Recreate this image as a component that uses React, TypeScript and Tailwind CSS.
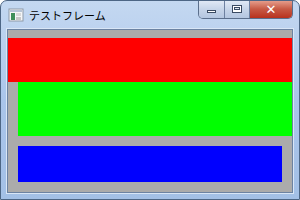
export default function App() {
  return (
    <div className="w-[300px] h-[200px] bg-white">
      <div className="relative flex h-full w-full flex-col overflow-hidden rounded-t-[7px] border border-[#4d6685] bg-gradient-to-b from-[#c4d8f1] via-[#aac5ea] to-[#a3c0e6]">
        {/* title bar */}
        <div className="flex h-[28px] shrink-0 items-start pl-[7px] pt-[6px]">
          <svg width="16" height="16" viewBox="0 0 16 16" className="shrink-0">
            <rect x="1" y="2" width="14" height="12" fill="#f4f6f8" stroke="#8e9aa8" />
            <rect x="2" y="3" width="12" height="2" fill="#b6c4d6" />
            <rect x="3" y="6" width="4" height="7" fill="#3f8f5a" />
            <rect x="8" y="6" width="5" height="3" fill="#d9d9d9" />
            <rect x="8" y="10" width="5" height="3" fill="#c8c8c8" />
          </svg>
          <span className="ml-[5px] mt-[1px] text-[11px] leading-[14px] text-black [font-family:'Noto_Sans_CJK_JP','Noto_Sans',sans-serif]">
            テストフレーム
          </span>
        </div>

        {/* caption buttons */}
        <div className="absolute right-[6px] top-[-1px] flex h-[19px] overflow-hidden rounded-b-[5px] border border-t-0 border-[#5b6f8c]">
          <div className="flex w-[26px] items-center justify-center border-r border-[#6d80a0] bg-gradient-to-b from-[#e3ebf6] via-[#c7d5e9] to-[#b4c6e0]">
            <div className="mt-[5px] h-[3px] w-[9px] border border-[#3a4a62] bg-white" />
          </div>
          <div className="flex w-[25px] items-center justify-center border-r border-[#6d80a0] bg-gradient-to-b from-[#e3ebf6] via-[#c7d5e9] to-[#b4c6e0]">
            <div className="h-[8px] w-[10px] border border-[#3a4a62] bg-white">
              <div className="m-[1px] h-[3px] border border-[#3a4a62] bg-[#dfe6f0]" />
            </div>
          </div>
          <div className="flex w-[42px] items-center justify-center bg-gradient-to-b from-[#e8a493] via-[#c75a45] to-[#b8301c]">
            <span className="text-[13px] font-bold leading-none text-white [font-family:'DejaVu_Sans',sans-serif]">
              ✕
            </span>
          </div>
        </div>

        {/* body */}
        <div className="flex min-h-0 flex-1 px-[6px] pb-[6px]">
          <div className="flex flex-1 border border-[#6c83a3] outline outline-1 outline-[#d9e6f6]">
            <div className="flex flex-1 flex-col bg-[#ababab] pt-[8px] pb-[10px]">
              <div className="h-[44px] bg-[#ff0000]" />
              <div className="ml-[10px] h-[54px] bg-[#00ff00]" />
              <div className="mx-[10px] mt-[10px] h-[36px] bg-[#0000ff]" />
            </div>
          </div>
        </div>
      </div>
    </div>
  );
}
